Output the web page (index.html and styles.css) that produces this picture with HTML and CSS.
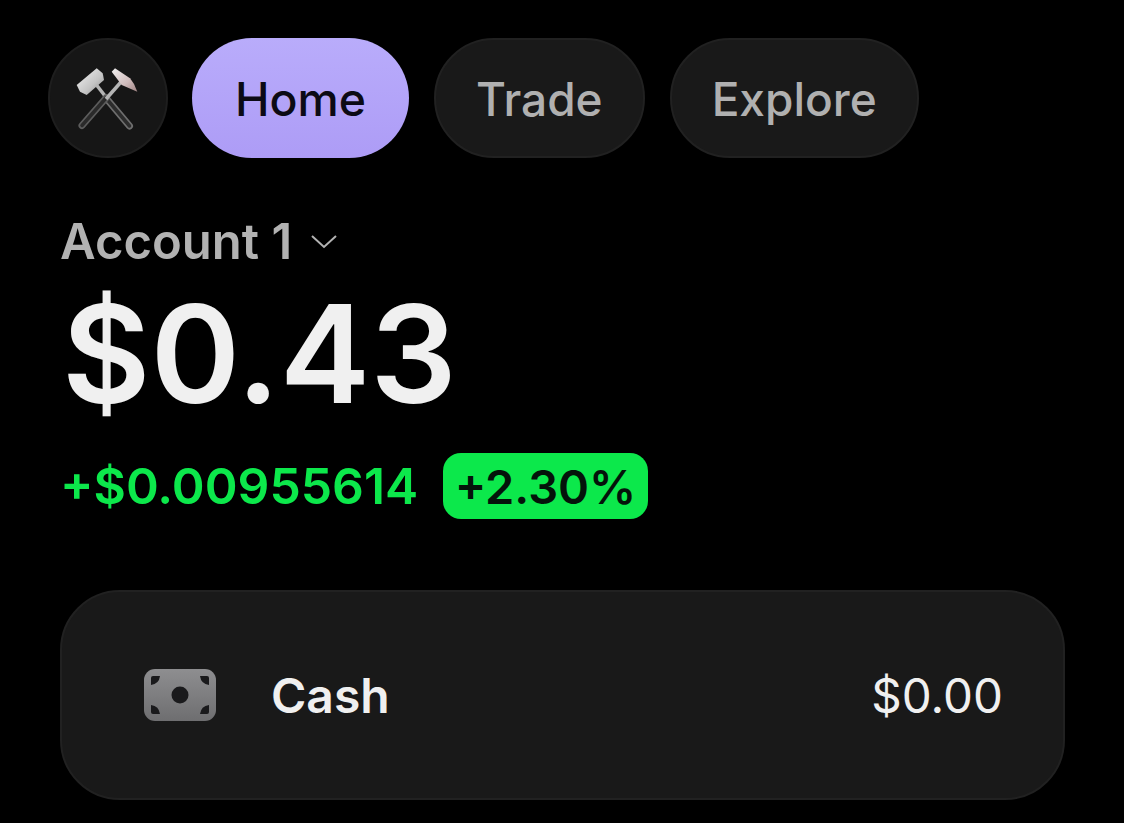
FILE: index.html
```html
<!DOCTYPE html>
<html lang="en">
<head>
<meta charset="utf-8">
<title>Account</title>
<link rel="stylesheet" href="styles.css">
</head>
<body>
<main class="page">
  <nav class="nav">
    <button class="logo" aria-label="Menu">
      <svg width="72" height="72" viewBox="0 0 72 72">
        <defs>
          <linearGradient id="hm" x1="0" y1="0" x2="1" y2="1"><stop offset="0" stop-color="#f4f4f4"/><stop offset="0.6" stop-color="#c4c4c4"/><stop offset="1" stop-color="#858585"/></linearGradient>
          <linearGradient id="hd" x1="0" y1="0" x2="1" y2="1"><stop offset="0" stop-color="#efefef"/><stop offset="0.6" stop-color="#d0bcbc"/><stop offset="1" stop-color="#a08484"/></linearGradient>
        </defs>
        <path d="M34 36 L57.500 64" stroke="#6e6e6e" stroke-width="7" stroke-linecap="round"/>
        <path d="M34 36 L57.500 64" stroke="#2c2c2c" stroke-width="3.500" stroke-linecap="round"/>
        <path d="M23 21 L35 36.500" stroke="#b5b5b5" stroke-width="3.500"/>
        <path d="M4.700 23 L24.700 6.300 L30.700 11.300 L32 18 L14.700 33 L8 29.700 Z" fill="url(#hm)"/>
        <path d="M10 63.500 L34 36" stroke="#5c5c5c" stroke-width="7" stroke-linecap="round"/>
        <path d="M10 63.500 L34 36" stroke="#2a2a2a" stroke-width="3.500" stroke-linecap="round"/>
        <path d="M34 37 L49 20" stroke="#b5b5b5" stroke-width="3.500"/>
        <path d="M39.700 9.700 L43 6.300 L58 16.300 Q63 22 65.300 29.700 L49.700 23 Z" fill="url(#hd)"/>
      </svg>
    </button>
    <a class="pill active">Home</a>
    <a class="pill">Trade</a>
    <a class="pill">Explore</a>
  </nav>

  <section class="summary">
    <div class="account">
      <span>Account 1</span>
      <svg class="chev" width="28" height="16" viewBox="0 0 28 16"><path d="M2 3 L14 14 L26 3" fill="none" stroke="#b2b2b2" stroke-width="2"/></svg>
    </div>
    <div class="balance">$0.43</div>
    <div class="change">
      <span class="delta">+$0.00955614</span>
      <span class="badge">+2.30%</span>
    </div>
  </section>

  <section class="card">
    <svg class="cash-icon" width="72" height="52" viewBox="0 0 72 52">
      <defs><linearGradient id="bill" x1="0" y1="0" x2="0" y2="1"><stop offset="0" stop-color="#8e8e90"/><stop offset="1" stop-color="#6e6e70"/></linearGradient></defs>
      <rect width="72" height="52" rx="11" fill="url(#bill)"/>
      <circle cx="36" cy="26" r="8.500" fill="#1a1a1c"/>
      <path d="M7 9 Q7 7 9 7 L16 7 Q15 15 7 16Z" fill="#1a1a1c"/>
      <path d="M65 9 Q65 7 63 7 L56 7 Q57 15 65 16Z" fill="#1a1a1c"/>
      <path d="M7 43 Q7 45 9 45 L16 45 Q15 37 7 36Z" fill="#1a1a1c"/>
      <path d="M65 43 Q65 45 63 45 L56 45 Q57 37 65 36Z" fill="#1a1a1c"/>
    </svg>
    <span class="cash-label">Cash</span>
    <span class="cash-value">$0.00</span>
  </section>
</main>
</body>
</html>
```
FILE: styles.css
```css
* { box-sizing: border-box; }
html, body {
  margin: 0;
  height: 100%;
  background: #000;
  overflow: hidden;
}
body {
  font-family: Inter, "Liberation Sans", sans-serif;
  color: #f0f0f0;
}
.page {
  padding: 38px 60px 0 48px;
}
.nav {
  display: flex;
  align-items: center;
  gap: 25px;
}
.logo {
  width: 120px;
  height: 120px;
  border-radius: 50%;
  border: 2px solid #1e1e1e;
  background: #161616;
  display: flex;
  align-items: center;
  justify-content: center;
  padding: 0;
  margin-right: -1px;
}
.pill {
  height: 120px;
  padding: 2px 40px 0;
  border-radius: 60px;
  display: flex;
  align-items: center;
  background: #191919;
  border: 2px solid #212121;
  color: #b0b0b0;
  font-size: 46px;
  font-weight: 500;
}
.pill.active {
  background: linear-gradient(#b9acfb, #ad9cf6);
  border: 0;
  padding: 2px 43px 0;
  font-size: 46.400px;
  color: #0c0a14;
}
.summary {
  padding: 56px 0 0 12px;
}
.account {
  display: flex;
  align-items: center;
  gap: 18px;
  height: 54px;
  color: #b2b2b2;
  font-size: 49px;
  font-weight: 600;
}
.balance {
  font-size: 136px;
  font-weight: 600;
  line-height: 160px;
  margin: 6px 0 0 2px;
  color: #f0f0f0;
}
.change {
  display: flex;
  align-items: center;
  gap: 25px;
  margin-top: 19px;
}
.delta {
  color: #0ce84b;
  font-size: 49.800px;
  font-weight: 600;
}
.badge {
  background: #0ce84b;
  color: #04130a;
  font-size: 47px;
  font-weight: 600;
  height: 66px;
  padding: 0 11.500px;
  border-radius: 18px;
  display: flex;
  align-items: center;
}
.card {
  margin: 71px -1px 0 12px;
  height: 210px;
  border-radius: 60px;
  background: #191919;
  border: 2px solid #212121;
  display: flex;
  align-items: center;
  padding: 0 60px 0 82px;
}
.cash-label {
  margin-left: 55px;
  font-size: 48px;
  font-weight: 600;
}
.cash-value {
  margin-left: auto;
  font-size: 47.500px;
  font-weight: 400;
}
```
